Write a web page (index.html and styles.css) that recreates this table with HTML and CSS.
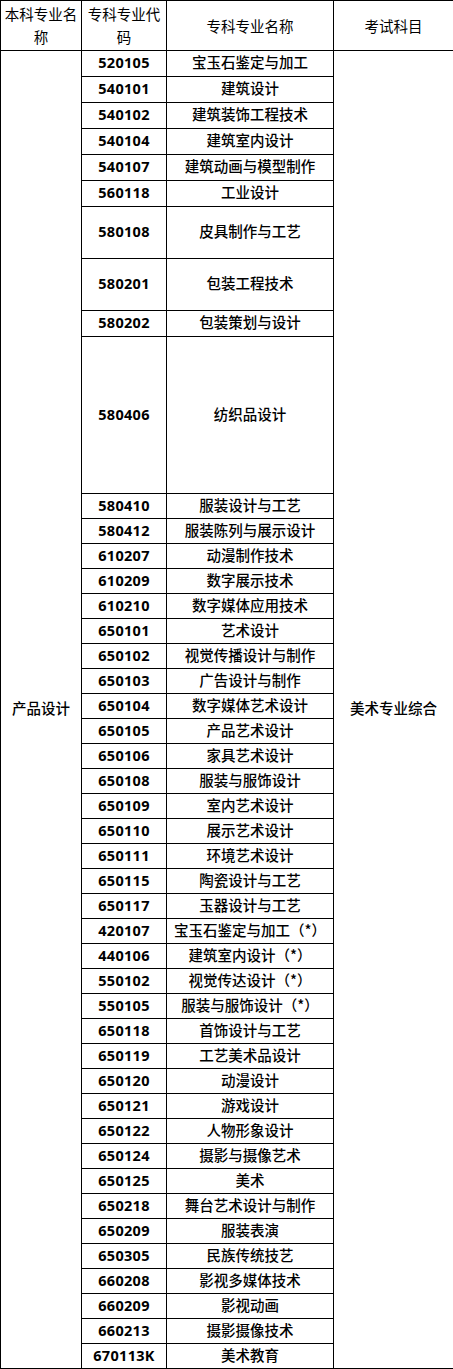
FILE: index.html
```html
<!DOCTYPE html>
<html lang="zh-CN">
<head>
<meta charset="utf-8">
<title>专业对照表</title>
<link rel="stylesheet" href="styles.css">
</head>
<body>
<table class="majors">
  <colgroup>
    <col class="c1"><col class="c2"><col class="c3"><col class="c4">
  </colgroup>
  <thead>
    <tr class="head">
      <th>本科专业名称</th>
      <th>专科专业代码</th>
      <th>专科专业名称</th>
      <th>考试科目</th>
    </tr>
  </thead>
  <tbody>
    <tr class="r26"><td rowspan="45" class="big">产品设计</td><td class="code">520105</td><td>宝玉石鉴定与加工</td><td rowspan="45" class="big">美术专业综合</td></tr>
    <tr class="r26"><td class="code">540101</td><td>建筑设计</td></tr>
    <tr class="r26"><td class="code">540102</td><td>建筑装饰工程技术</td></tr>
    <tr class="r26"><td class="code">540104</td><td>建筑室内设计</td></tr>
    <tr class="r26"><td class="code">540107</td><td>建筑动画与模型制作</td></tr>
    <tr class="r26"><td class="code">560118</td><td>工业设计</td></tr>
    <tr class="r52"><td class="code">580108</td><td>皮具制作与工艺</td></tr>
    <tr class="r52"><td class="code">580201</td><td>包装工程技术</td></tr>
    <tr class="r26"><td class="code">580202</td><td>包装策划与设计</td></tr>
    <tr class="r157"><td class="code">580406</td><td>纺织品设计</td></tr>
    <tr class="r25"><td class="code">580410</td><td>服装设计与工艺</td></tr>
    <tr class="r25"><td class="code">580412</td><td>服装陈列与展示设计</td></tr>
    <tr class="r25"><td class="code">610207</td><td>动漫制作技术</td></tr>
    <tr class="r25"><td class="code">610209</td><td>数字展示技术</td></tr>
    <tr class="r25"><td class="code">610210</td><td>数字媒体应用技术</td></tr>
    <tr class="r25"><td class="code">650101</td><td>艺术设计</td></tr>
    <tr class="r25"><td class="code">650102</td><td>视觉传播设计与制作</td></tr>
    <tr class="r25"><td class="code">650103</td><td>广告设计与制作</td></tr>
    <tr class="r25"><td class="code">650104</td><td>数字媒体艺术设计</td></tr>
    <tr class="r25"><td class="code">650105</td><td>产品艺术设计</td></tr>
    <tr class="r25"><td class="code">650106</td><td>家具艺术设计</td></tr>
    <tr class="r25"><td class="code">650108</td><td>服装与服饰设计</td></tr>
    <tr class="r25"><td class="code">650109</td><td>室内艺术设计</td></tr>
    <tr class="r25"><td class="code">650110</td><td>展示艺术设计</td></tr>
    <tr class="r25"><td class="code">650111</td><td>环境艺术设计</td></tr>
    <tr class="r25"><td class="code">650115</td><td>陶瓷设计与工艺</td></tr>
    <tr class="r25"><td class="code">650117</td><td>玉器设计与工艺</td></tr>
    <tr class="r25"><td class="code">420107</td><td>宝玉石鉴定与加工（*）</td></tr>
    <tr class="r25"><td class="code">440106</td><td>建筑室内设计（*）</td></tr>
    <tr class="r25"><td class="code">550102</td><td>视觉传达设计（*）</td></tr>
    <tr class="r25"><td class="code">550105</td><td>服装与服饰设计（*）</td></tr>
    <tr class="r25"><td class="code">650118</td><td>首饰设计与工艺</td></tr>
    <tr class="r25"><td class="code">650119</td><td>工艺美术品设计</td></tr>
    <tr class="r25"><td class="code">650120</td><td>动漫设计</td></tr>
    <tr class="r25"><td class="code">650121</td><td>游戏设计</td></tr>
    <tr class="r25"><td class="code">650122</td><td>人物形象设计</td></tr>
    <tr class="r25"><td class="code">650124</td><td>摄影与摄像艺术</td></tr>
    <tr class="r25"><td class="code">650125</td><td>美术</td></tr>
    <tr class="r25"><td class="code">650218</td><td>舞台艺术设计与制作</td></tr>
    <tr class="r25"><td class="code">650209</td><td>服装表演</td></tr>
    <tr class="r25"><td class="code">650305</td><td>民族传统技艺</td></tr>
    <tr class="r25"><td class="code">660208</td><td>影视多媒体技术</td></tr>
    <tr class="r25"><td class="code">660209</td><td>影视动画</td></tr>
    <tr class="r25"><td class="code">660213</td><td>摄影摄像技术</td></tr>
    <tr class="r25"><td class="code">670113K</td><td>美术教育</td></tr>
  </tbody>
</table>
</body>
</html>
```

FILE: styles.css
```css
html, body {
  margin: 0;
  padding: 0;
  background: #ffffff;
}

.majors {
  border-collapse: collapse;
  table-layout: fixed;
  width: 453px;
  font-family: "Noto Sans CJK SC", "Noto Sans", sans-serif;
  font-size: 14.5px;
  color: #000000;
}

.c1 { width: 81px; }
.c2 { width: 85px; }
.c3 { width: 167px; }
.c4 { width: 120px; }

.majors th,
.majors td {
  border: 1px solid #000000;
  padding: 0 1px 3px;
  text-align: center;
  vertical-align: middle;
  line-height: 20px;
  overflow: hidden;
  white-space: nowrap;
}

.majors td {
  font-weight: 500;
}

.majors th {
  white-space: normal;
  font-weight: 400;
  line-height: 23px;
  padding-bottom: 1px;
}

.majors .code {
  font-family: "Noto Sans", "Noto Sans CJK SC", sans-serif;
  font-weight: 700;
  font-size: 14.5px;
  letter-spacing: 0.3px;
}

.head { height: 50px; }
.r26 { height: 26px; }
.r25 { height: 25px; }
.r52 { height: 52px; }
.r157 { height: 157px; }
```
